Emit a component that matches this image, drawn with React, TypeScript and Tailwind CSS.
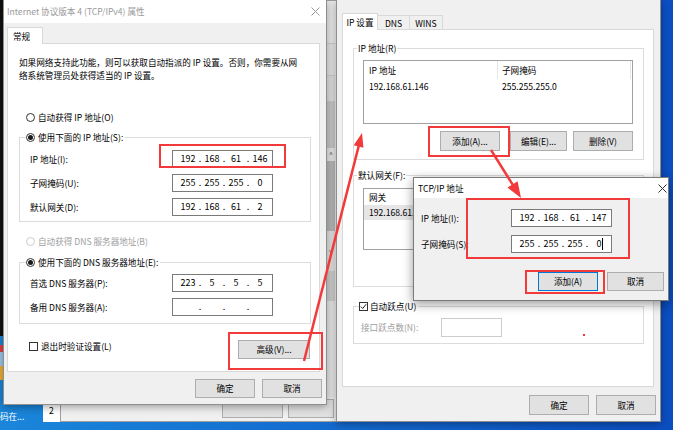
import React from 'react';

const RED = '#f23a3a';

function Radio({ on, dis }: { on?: boolean; dis?: boolean }) {
  return (
    <span
      className={
        'w-[9px] h-[9px] shrink-0 rounded-full border bg-white flex items-center justify-center ' +
        (dis ? 'border-[#cccccc]' : 'border-[#333333]')
      }
    >
      {on && <span className="w-[5px] h-[5px] rounded-full bg-[#1a1a1a]" />}
    </span>
  );
}

function Check({ on }: { on?: boolean }) {
  return (
    <span className="w-[9px] h-[9px] shrink-0 border border-[#333333] bg-white flex items-center justify-center">
      {on && (
        <svg width="7" height="7" viewBox="0 0 7 7">
          <path d="M0.8 3.6 L2.7 5.5 L6.2 1.2" fill="none" stroke="#222" strokeWidth="1" />
        </svg>
      )}
    </span>
  );
}

function XIcon({ color }: { color: string }) {
  return (
    <svg width="9" height="9" viewBox="0 0 9 9">
      <path d="M0.5 0.5 L8.5 8.5 M8.5 0.5 L0.5 8.5" stroke={color} strokeWidth="1" />
    </svg>
  );
}

function IpBox({ parts, cursor }: { parts: string[]; cursor?: boolean }) {
  return (
    <div className="w-[101px] h-[18px] shrink-0 bg-white border border-[#7a7a7a] flex items-center pl-[6px] text-[9px]">
      {parts.map((p, i) => (
        <React.Fragment key={i}>
          {i > 0 && <span className="w-[6px] text-center">.</span>}
          <span className="w-[18px] text-center">{p}</span>
        </React.Fragment>
      ))}
      {cursor && <span className="-ml-[6px] w-px h-[12px] bg-black" />}
    </div>
  );
}

function Btn({ children, w, focus, h = 'h-[19px]' }: { children: React.ReactNode; w: string; focus?: boolean; h?: string }) {
  return (
    <div
      className={
        w + ' ' + h + ' shrink-0 bg-[#e1e1e1] border flex items-center justify-center ' +
        (focus ? 'border-[#0078d7]' : 'border-[#adadad]')
      }
    >
      {children}
    </div>
  );
}

function Arrow({ x1, y1, x2, y2, head, half }: { x1: number; y1: number; x2: number; y2: number; head: number; half: number }) {
  const dx = x2 - x1;
  const dy = y2 - y1;
  const len = Math.hypot(dx, dy);
  const ux = dx / len;
  const uy = dy / len;
  const bx = x2 - ux * head;
  const by = y2 - uy * head;
  const px = -uy;
  const py = ux;
  const pts = `${x2},${y2} ${bx + px * half},${by + py * half} ${bx - px * half},${by - py * half}`;
  return (
    <g>
      <line x1={x1} y1={y1} x2={bx + ux * 2} y2={by + uy * 2} stroke={RED} strokeWidth={2.5} />
      <polygon points={pts} fill={RED} />
    </g>
  );
}

const LeftDialog = () => (
  <div className="absolute left-[3px] top-0 w-[324px] h-[405px] flex flex-col bg-[#f0f0f0] border-x border-b border-[#8f8f8f] shadow-[0_2px_8px_rgba(0,0,0,0.35)]">
    <div className="h-[23px] shrink-0 bg-white flex items-center justify-between pl-[3px] pr-[6px] text-[#9a9a9a]">
      <span>Internet 协议版本 4 (TCP/IPv4) 属性</span>
      <XIcon color="#9a9a9a" />
    </div>
    <div className="pl-[3px] pt-[4px]">
      <div className="relative z-10 -mb-px flex">
        <div className="h-[17px] w-[36px] bg-white border-x border-t border-[#d9d9d9] flex items-center pl-[5px]">常规</div>
      </div>
      <div className="w-[313px] h-[329px] bg-white border border-[#d9d9d9] pl-[11px] pr-[8px] flex flex-col">
        <div className="mt-[12px] leading-[13px] whitespace-nowrap">
          <div>如果网络支持此功能，则可以获取自动指派的 IP 设置。否则，你需要从网</div>
          <div>络系统管理员处获得适当的 IP 设置。</div>
        </div>
        <div className="mt-[28px] h-[14px] ml-[7px] flex items-center gap-[3px]">
          <Radio />
          <span>自动获得 IP 地址(O)</span>
        </div>
        <div className="mt-[13px] border border-[#dcdcdc] pl-[10px] pb-[5px] flex flex-col">
          <div className="-mt-[8px] -ml-[4px] h-[14px] flex">
            <div className="bg-white pr-[2px] flex items-center gap-[3px]">
              <Radio on />
              <span>使用下面的 IP 地址(S):</span>
            </div>
          </div>
          <div className="mt-[6px] flex flex-col gap-[6px]">
            <div className="flex items-center">
              <span className="w-[142px]">IP 地址(I):</span>
              <IpBox parts={['192', '168', '61', '146']} />
            </div>
            <div className="flex items-center">
              <span className="w-[142px]">子网掩码(U):</span>
              <IpBox parts={['255', '255', '255', '0']} />
            </div>
            <div className="flex items-center">
              <span className="w-[142px]">默认网关(D):</span>
              <IpBox parts={['192', '168', '61', '2']} />
            </div>
          </div>
        </div>
        <div className="mt-[12px] h-[14px] ml-[7px] flex items-center gap-[3px] text-[#a0a0a0]">
          <Radio dis />
          <span>自动获得 DNS 服务器地址(B)</span>
        </div>
        <div className="mt-[14px] border border-[#dcdcdc] pl-[10px] pb-[7px] flex flex-col">
          <div className="-mt-[8px] -ml-[4px] h-[14px] flex">
            <div className="bg-white pr-[2px] flex items-center gap-[3px]">
              <Radio on />
              <span>使用下面的 DNS 服务器地址(E):</span>
            </div>
          </div>
          <div className="mt-[5px] flex flex-col gap-[6px]">
            <div className="flex items-center">
              <span className="w-[142px]">首选 DNS 服务器(P):</span>
              <IpBox parts={['223', '5', '5', '5']} />
            </div>
            <div className="flex items-center">
              <span className="w-[142px]">备用 DNS 服务器(A):</span>
              <IpBox parts={['', '', '', '']} />
            </div>
          </div>
        </div>
        <div className="mt-[15px] flex items-start justify-between pr-[1px]">
          <div className="h-[14px] ml-[10px] flex items-center gap-[3px]">
            <Check />
            <span>退出时验证设置(L)</span>
          </div>
          <div className="mt-[1px]">
            <Btn w="w-[72px]">高级(V)...</Btn>
          </div>
        </div>
      </div>
    </div>
    <div className="mt-[7px] pr-[4px] flex justify-end gap-[7px]">
      <Btn w="w-[60px]">确定</Btn>
      <Btn w="w-[60px]">取消</Btn>
    </div>
  </div>
);

const ListBox = ({ head, rows, hh, sel }: { head: string[]; rows: string[][]; hh: string; sel?: boolean }) => (
  <div className="w-[270px] bg-white border border-[#a0a0a0] flex flex-col">
    <div className={hh + ' flex items-center'}>
      <span className="w-[134px] pl-[5px] h-full flex items-center border-r border-[#e5e5e5]">{head[0]}</span>
      <span className="w-[133px] pl-[4px] h-full flex items-center border-r border-[#e5e5e5]">{head[1]}</span>
    </div>
    {rows.map((r, i) => (
      <div key={i} className={'h-[15px] flex items-center ' + (sel ? 'bg-[#e6e6e6]' : '')}>
        <span className="w-[134px] pl-[5px]">{r[0]}</span>
        <span className="w-[133px] pl-[4px]">{r[1]}</span>
      </div>
    ))}
  </div>
);

const RightDialog = () => (
  <div className="absolute left-[336px] top-0 w-[325px] h-[422px] flex flex-col bg-[#f0f0f0] border-x border-b border-[#8f8f8f] shadow-[0_2px_8px_rgba(0,0,0,0.35)]">
    <div className="pl-[5px] pt-[13px]">
      <div className="relative z-10 -mb-px h-[17px] flex items-end">
        <div className="h-[17px] w-[36px] bg-white border-x border-t border-[#d9d9d9] flex items-center justify-center">IP 设置</div>
        <div className="h-[15px] w-[32px] border-t border-r border-[#d9d9d9] flex items-center justify-center">DNS</div>
        <div className="h-[15px] w-[33px] border-t border-r border-[#d9d9d9] flex items-center justify-center">WINS</div>
      </div>
      <div className="w-[312px] h-[358px] bg-white border border-[#d9d9d9] pl-[10px] flex flex-col">
        <div className="mt-[18px] w-[291px] border border-[#dcdcdc] pl-[9px] pr-[10px] pb-[8px] flex flex-col">
          <div className="-mt-[8px] -ml-[6px] h-[14px] flex">
            <div className="bg-white px-[1px] flex items-center">IP 地址(R)</div>
          </div>
          <div className="mt-[5px] h-[64px] flex">
            <ListBox head={['IP 地址', '子网掩码']} rows={[['192.168.61.146', '255.255.255.0']]} hh="h-[18px]" />
          </div>
          <div className="mt-[7px] flex justify-end">
            <Btn w="w-[60px]" h="h-[20px]">添加(A)...</Btn>
            <div className="w-[10px]" />
            <Btn w="w-[57px]" h="h-[20px]">编辑(E)...</Btn>
            <div className="w-[6px]" />
            <Btn w="w-[60px]" h="h-[20px]">删除(V)</Btn>
          </div>
        </div>
        <div className="mt-[15px] w-[291px] border border-[#dcdcdc] pl-[9px] pr-[10px] pb-[10px] flex flex-col">
          <div className="-mt-[8px] -ml-[6px] h-[14px] flex">
            <div className="bg-white px-[1px] flex items-center">默认网关(F):</div>
          </div>
          <div className="mt-[6px] h-[62px] flex">
            <ListBox head={['网关', '跃点数']} rows={[['192.168.61.2', '自动']]} hh="h-[16px]" sel />
          </div>
          <div className="mt-[6px] flex justify-end">
            <Btn w="w-[60px]" h="h-[20px]">添加(D)...</Btn>
            <div className="w-[10px]" />
            <Btn w="w-[57px]" h="h-[20px]">编辑(T)...</Btn>
            <div className="w-[6px]" />
            <Btn w="w-[60px]" h="h-[20px]">删除(M)</Btn>
          </div>
        </div>
        <div className="mt-[19px] w-[291px] border border-[#dcdcdc] pb-[6px] flex flex-col">
          <div className="-mt-[8px] ml-[5px] h-[14px] flex">
            <div className="bg-white pr-[2px] flex items-center gap-[2px]">
              <Check on />
              <span>自动跃点(U)</span>
            </div>
          </div>
          <div className="mt-[5px] pl-[7px] flex items-center">
            <span className="w-[80px] text-[#a0a0a0]">接口跃点数(N):</span>
            <div className="w-[61px] h-[19px] bg-white border border-[#cccccc]" />
          </div>
        </div>
      </div>
    </div>
    <div className="mt-[8px] pr-[4px] flex justify-end gap-[7px]">
      <Btn w="w-[60px]" h="h-[20px]">确定</Btn>
      <Btn w="w-[60px]" h="h-[20px]">取消</Btn>
    </div>
  </div>
);

const TcpDialog = () => (
  <div className="absolute left-[413px] top-[177px] w-[256px] h-[124px] flex flex-col bg-[#f0f0f0] border border-[#7a7a7a] shadow-[0_3px_10px_rgba(0,0,0,0.4)]">
    <div className="h-[20px] shrink-0 bg-white flex items-center justify-between pl-[4px] pr-[1px]">
      <span>TCP/IP 地址</span>
      <XIcon color="#333333" />
    </div>
    <div className="pl-[7px] pt-[11px] flex flex-col">
      <div className="flex items-center">
        <span className="w-[90px]">IP 地址(I):</span>
        <IpBox parts={['192', '168', '61', '147']} />
      </div>
      <div className="mt-[8px] flex items-center">
        <span className="w-[90px]">子网掩码(S):</span>
        <IpBox parts={['255', '255', '255', '0']} cursor />
      </div>
      <div className="mt-[19px] pr-[4px] flex justify-end gap-[9px]">
        <Btn w="w-[60px]" focus>添加(A)</Btn>
        <Btn w="w-[57px]">取消</Btn>
      </div>
    </div>
  </div>
);

const BackWindow = () => (
  <div className="absolute left-[60px] top-0 w-[277px] h-[422px] flex flex-col bg-[#f0f0f0] border border-[#a0a0a0]">
    <div className="flex-1 flex justify-end pr-[1px]">
      <div className="w-[8px] flex flex-col text-[7px] text-[#555] leading-none">
        <div className="h-[43px] bg-[#ececec] border-b border-[#cfcfcf]" />
        <div className="h-[32px] bg-[#e6e6e6] border-b border-[#cfcfcf]" />
        <div className="h-[25px] bg-[#e0e0e0]" />
        <div className="h-[47px] bg-[#c9c9c9]" />
        <div className="h-[13px] bg-[#e8e8e8] flex items-center justify-center">^</div>
        <div className="h-[70px] bg-[#b9b9b9]" />
        <div className="h-[40px] bg-[#e3e3e3] flex items-center justify-center">v</div>
        <div className="h-[30px] bg-[#cfcfcf]" />
        <div className="flex-1 bg-[#e8e8e8]" />
      </div>
    </div>
    <div className="h-[24px] shrink-0 flex justify-end gap-[5px] pr-[2px] pt-[2px]">
      <div className="w-[61px] h-[19px] bg-[#e1e1e1] border border-[#adadad]" />
      <div className="w-[46px] h-[19px] bg-[#e1e1e1] border border-[#adadad]" />
    </div>
  </div>
);

export default function App() {
  return (
    <div className="relative w-[673px] h-[430px] overflow-hidden bg-[linear-gradient(90deg,#1a86da,#0c4ec2)] text-[8.6px] text-black font-['Noto_Sans_CJK_SC',sans-serif]">
      <div className="absolute left-0 top-0 w-[3px] h-[336px] bg-[#111111]" />
      <div className="absolute left-0 top-[345px] w-[3px] flex flex-col">
        <div className="h-[7px] bg-[#e04040]" />
        <div className="h-[14px] bg-[#9cc8f0]" />
        <div className="h-[14px] bg-[#f0b030]" />
      </div>
      <div className="absolute left-[43px] top-[395px] w-[17px] h-[27px] bg-white flex items-end justify-center pb-[5px]">2</div>
      <div className="absolute left-0 top-[412px] text-white leading-none">码在...</div>
      <BackWindow />
      <LeftDialog />
      <RightDialog />
      <TcpDialog />
      <svg className="absolute inset-0 pointer-events-none" width="673" height="430">
        <g fill="none" stroke={RED} strokeWidth="2">
          <rect x="160" y="145" width="125" height="22" />
          <rect x="229" y="333" width="93" height="36" />
          <rect x="429" y="127" width="80" height="29" />
          <rect x="467" y="199" width="162" height="59" />
          <rect x="526" y="271" width="78" height="22" />
        </g>
        <Arrow x1={304} y1={361} x2={362} y2={133} head={14} half={5} />
        <Arrow x1={491} y1={150} x2={521} y2={198} head={16} half={6} />
        <rect x="583" y="334" width="2" height="2" fill={RED} />
      </svg>
    </div>
  );
}
